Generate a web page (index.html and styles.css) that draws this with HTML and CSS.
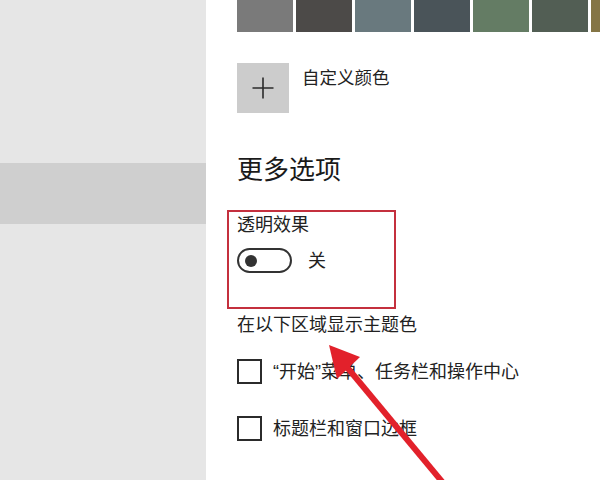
FILE: index.html
```html
<!DOCTYPE html>
<html lang="zh-CN">
<head>
<meta charset="utf-8">
<title>颜色</title>
<link rel="stylesheet" href="styles.css">
</head>
<body>
<div class="window">
  <aside class="sidebar">
    <div class="nav-item selected"></div>
  </aside>
  <main class="content">
    <div class="swatches">
      <div class="swatch sw1"></div>
      <div class="swatch sw2"></div>
      <div class="swatch sw3"></div>
      <div class="swatch sw4"></div>
      <div class="swatch sw5"></div>
      <div class="swatch sw6"></div>
      <div class="swatch sw7"></div>
    </div>
    <div class="custom-row">
      <div class="plus-box">
        <svg width="22" height="22" viewBox="0 0 22 22"><path d="M11 0.5V21.5M0.5 11H21.5" stroke="#2b2b2b" stroke-width="1.6" fill="none"/></svg>
      </div>
      <div class="custom-label">自定义颜色</div>
    </div>
    <h2 class="heading">更多选项</h2>
    <div class="label">透明效果</div>
    <div class="toggle-row">
      <div class="toggle"><div class="knob"></div></div>
      <div class="toggle-text">关</div>
    </div>
    <div class="label section-label">在以下区域显示主题色</div>
    <div class="check-row first">
      <div class="checkbox"></div>
      <div class="check-text">“开始”菜单、任务栏和操作中心</div>
    </div>
    <div class="check-row second">
      <div class="checkbox"></div>
      <div class="check-text">标题栏和窗口边框</div>
    </div>
  </main>
  <div class="highlight"></div>
  <svg class="arrow" width="600" height="480" viewBox="0 0 600 480">
    <line x1="346" y1="366" x2="444" y2="484" stroke="#e2212b" stroke-width="6"/>
    <polygon points="329,345 360,357 337,379" fill="#e2212b"/>
  </svg>
</div>
</body>
</html>
```
FILE: styles.css
```css
html, body {
  margin: 0;
  padding: 0;
  background: #ffffff;
}
body {
  font-family: "Liberation Sans", "Noto Sans CJK SC", sans-serif;
  color: #222222;
}
.window {
  position: relative;
  width: 600px;
  height: 480px;
  display: flex;
  overflow: hidden;
}
.sidebar {
  width: 206px;
  flex: none;
  background: #e6e6e6;
  padding-top: 163px;
  box-sizing: border-box;
}
.nav-item {
  height: 61px;
}
.nav-item.selected {
  background: #cfcfcf;
}
.content {
  flex: 1;
  padding-left: 31px;
  overflow: hidden;
  min-width: 0;
}
.swatches {
  display: flex;
  gap: 3px;
  height: 32px;
}
.swatch {
  width: 56px;
  height: 32px;
  flex: none;
}
.sw1 { background: #7a7a7a; }
.sw2 { background: #4c4a48; }
.sw3 { background: #69797e; }
.sw4 { background: #4a5459; }
.sw5 { background: #647c64; }
.sw6 { background: #525e54; }
.sw7 { background: #847545; }
.custom-row {
  display: flex;
  gap: 13px;
  margin-top: 31px;
  align-items: flex-start;
}
.plus-box {
  width: 52px;
  height: 50px;
  background: #cccccc;
  display: flex;
  align-items: center;
  justify-content: center;
}
.custom-label {
  font-size: 17.5px;
  line-height: 24px;
  margin-top: 3px;
}
.heading {
  margin: 39px 0 0 0;
  font-size: 26px;
  font-weight: normal;
  line-height: 36px;
  color: #1a1a1a;
}
.label {
  font-size: 18px;
  line-height: 24px;
  margin-top: 25px;
}
.toggle-row {
  display: flex;
  align-items: center;
  margin-top: 11px;
  height: 25px;
}
.toggle {
  width: 55px;
  height: 25px;
  box-sizing: border-box;
  border: 2px solid #333333;
  border-radius: 13px;
  display: flex;
  align-items: center;
  padding-left: 6px;
}
.knob {
  width: 12px;
  height: 12px;
  border-radius: 50%;
  background: #333333;
}
.toggle-text {
  font-size: 18px;
  line-height: 24px;
  margin-left: 16px;
}
.section-label {
  margin-top: 40px;
}
.check-row {
  display: flex;
  align-items: center;
  gap: 11px;
  height: 25px;
}
.check-row.first {
  margin-top: 22px;
}
.check-row.second {
  margin-top: 32px;
}
.checkbox {
  width: 25px;
  height: 25px;
  box-sizing: border-box;
  border: 2px solid #2b2b2b;
  flex: none;
}
.check-text {
  font-size: 18px;
  line-height: 24px;
  white-space: nowrap;
}
.highlight {
  position: absolute;
  left: 227px;
  top: 210px;
  width: 169px;
  height: 99px;
  box-sizing: border-box;
  border: 2px solid #c4303e;
  pointer-events: none;
}
.arrow {
  position: absolute;
  left: 0;
  top: 0;
  pointer-events: none;
}
```
